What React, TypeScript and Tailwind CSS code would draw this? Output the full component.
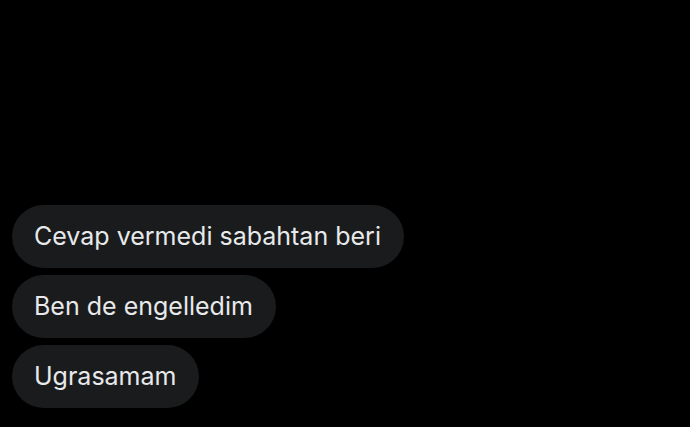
import React from 'react';

const messages = ['Cevap vermedi sabahtan beri', 'Ben de engelledim', 'Ugrasamam'];

export default function App() {
  return (
    <div className="flex h-[427px] w-[690px] flex-col items-start justify-end gap-[7px] bg-black pb-[19px] pl-[12px]">
      {messages.map((m) => (
        <div
          key={m}
          className="flex h-[63px] items-center rounded-full bg-[#1a1b1d] pl-[22px] pr-[23px] font-['Inter',sans-serif] text-[25px] text-[#e7e9ea]"
        >
          {m}
        </div>
      ))}
    </div>
  );
}
